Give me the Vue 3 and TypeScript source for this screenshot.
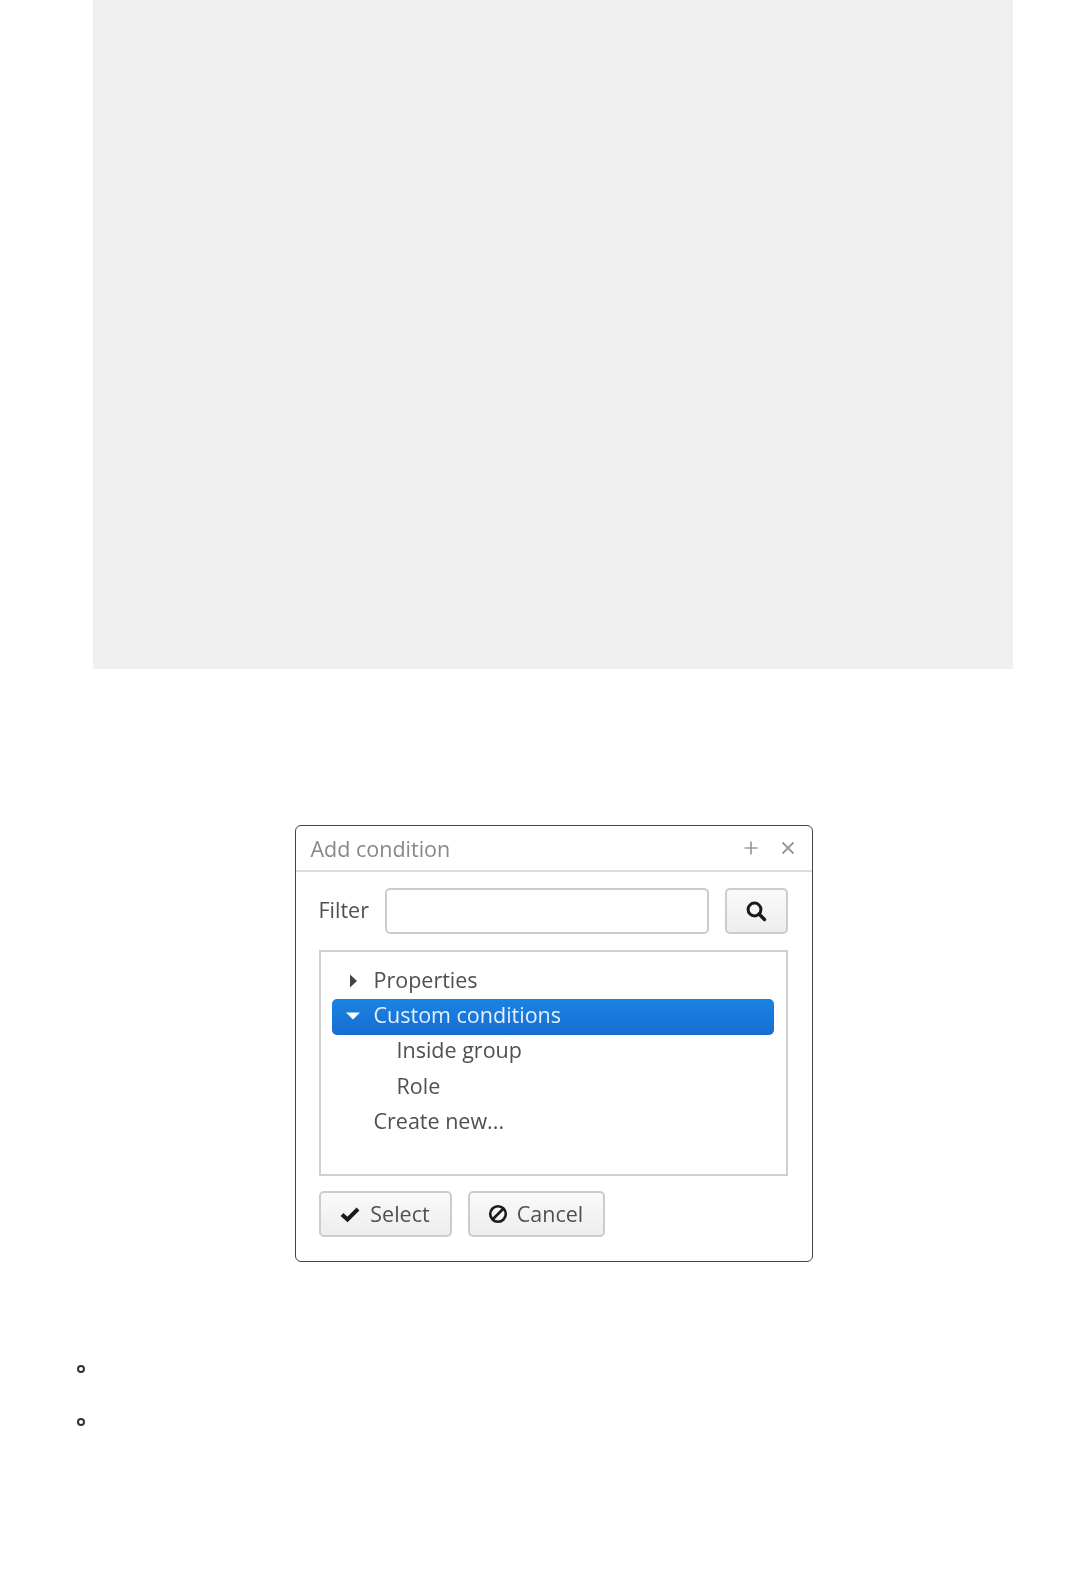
<script setup lang="ts">
interface TreeRow {
  label: string;
  level: number;
  arrow?: 'right' | 'down';
  selected?: boolean;
}

const rows: TreeRow[] = [
  { label: 'Properties', level: 0, arrow: 'right' },
  { label: 'Custom conditions', level: 0, arrow: 'down', selected: true },
  { label: 'Inside group', level: 1 },
  { label: 'Role', level: 1 },
  { label: 'Create new...', level: 0 }
];
</script>

<template>
  <div class="page">
    <div class="placeholder"></div>

    <div class="dialog">
      <div class="dialog-head">
        <span class="dialog-title">Add condition</span>
        <span class="head-tools">
          <svg width="16" height="16" viewBox="0 0 16 16"><path d="M8 1.500v13M1.500 8h13" stroke="#999" stroke-width="1.700" fill="none" /></svg>
          <svg width="16" height="16" viewBox="0 0 16 16"><path d="M2.500 2.500l11 11M13.500 2.500l-11 11" stroke="#999" stroke-width="1.800" fill="none" /></svg>
        </span>
      </div>

      <div class="dialog-body">
        <div class="filter-row">
          <label class="filter-label">Filter</label>
          <input class="filter-input" type="text" />
          <button class="btn search-btn" type="button">
            <svg width="22" height="22" viewBox="0 0 22 22">
              <circle cx="9.500" cy="9.500" r="6.400" stroke="#1a1a1a" stroke-width="3" fill="none" />
              <path d="M14 14l5.500 5.500" stroke="#1a1a1a" stroke-width="3.400" stroke-linecap="round" />
            </svg>
          </button>
        </div>

        <div class="tree">
          <div
            v-for="row in rows"
            :key="row.label"
            class="tree-row"
            :class="{ selected: row.selected, nested: row.level === 1 }"
          >
            <span class="arrow">
              <svg v-if="row.arrow === 'right'" width="10" height="16" viewBox="0 0 10 16"><path d="M2 1.500L9 8l-7 6.500z" fill="#444" /></svg>
              <svg v-else-if="row.arrow === 'down'" width="16" height="10" viewBox="0 0 16 10"><path d="M1 1.500h14L8 8.500z" fill="#fff" /></svg>
            </span>
            <span class="row-label">{{ row.label }}</span>
          </div>
        </div>

        <div class="actions">
          <button class="btn action-btn select-btn" type="button">
            <svg width="20" height="16" viewBox="0 0 20 16"><path d="M2 8.500l5.500 5L18 3" stroke="#1a1a1a" stroke-width="4" fill="none" /></svg>
            <span class="btn-label">Select</span>
          </button>
          <button class="btn action-btn cancel-btn" type="button">
            <svg width="20" height="20" viewBox="0 0 20 20">
              <circle cx="10" cy="10" r="7.800" stroke="#1a1a1a" stroke-width="2.600" fill="none" />
              <path d="M4.500 15.500l11-11" stroke="#1a1a1a" stroke-width="2.600" />
            </svg>
            <span class="btn-label">Cancel</span>
          </button>
        </div>
      </div>
    </div>

    <ul class="bullets">
      <li></li>
      <li></li>
    </ul>
  </div>
</template>

<style scoped>
.page {
  width: 1075px;
  font-family: "Open Sans", "Noto Sans", sans-serif;
  font-size: 21.5px;
  color: #505050;
}

.placeholder {
  width: 920px;
  height: 669px;
  margin-left: 93px;
  background: #f0f0f0;
}

.dialog {
  width: 517.500px;
  height: 437px;
  box-sizing: border-box;
  margin: 156px 0 0 295px;
  border: 1.500px solid #444;
  border-radius: 6px;
  background: #fff;
  filter: blur(0.4px);
}

.dialog-head {
  display: flex;
  align-items: center;
  justify-content: space-between;
  height: 46px;
  box-sizing: border-box;
  padding: 0 15.500px 0 14.500px;
  border-bottom: 2px solid #ddd;
}

.dialog-title {
  color: #888;
}

.head-tools {
  display: flex;
  gap: 21px;
  align-items: center;
}

.dialog-body {
  padding: 16px 23.500px 0 22.500px;
}

.filter-row {
  display: flex;
  align-items: center;
  height: 46px;
}

.filter-label {
  width: 66px;
  padding-bottom: 4px;
}

.filter-input {
  width: 324px;
  height: 46px;
  box-sizing: border-box;
  border: 2px solid #ccc;
  border-radius: 5px;
  background: #fff;
  outline: none;
}

.btn {
  display: inline-flex;
  align-items: center;
  justify-content: center;
  height: 46px;
  box-sizing: border-box;
  border: 2px solid #ccc;
  border-radius: 5px;
  background: linear-gradient(#fafafa, #ededed);
  font-family: inherit;
  font-size: inherit;
  color: #505050;
  padding: 0;
}

.btn-label {
  padding-bottom: 2px;
}

.search-btn {
  width: 63px;
  margin-left: 16px;
}

.tree {
  height: 226px;
  box-sizing: border-box;
  margin-top: 16px;
  padding: 12px 12px 0 11px;
  border: 2px solid #d0d0d0;
}

.tree-row {
  display: flex;
  align-items: center;
  height: 35.400px;
  padding-left: 13px;
  border-radius: 5px;
}

.tree-row.nested {
  padding-left: 36px;
}

.row-label {
  padding-bottom: 5px;
}

.tree-row.selected {
  color: #e4f0fb;
  background: linear-gradient(#1b84e3, #166dd2);
}

.arrow {
  display: flex;
  align-items: center;
  justify-content: center;
  width: 17px;
  margin-right: 12px;
  padding-bottom: 2px;
  flex: none;
}

.actions {
  display: flex;
  gap: 16px;
  margin-top: 15px;
}

.action-btn {
  gap: 10px;
}

.select-btn {
  width: 133px;
}

.cancel-btn {
  width: 137px;
  gap: 9px;
  padding-right: 1px;
}

.bullets {
  margin: 80px 0 0;
  padding: 0 0 0 77px;
  list-style: none;
}

.bullets li {
  display: flex;
  align-items: center;
  height: 53.500px;
}

.bullets li::before {
  content: "";
  width: 8px;
  height: 8px;
  box-sizing: border-box;
  border: 2px solid #333;
  border-radius: 50%;
}
</style>
